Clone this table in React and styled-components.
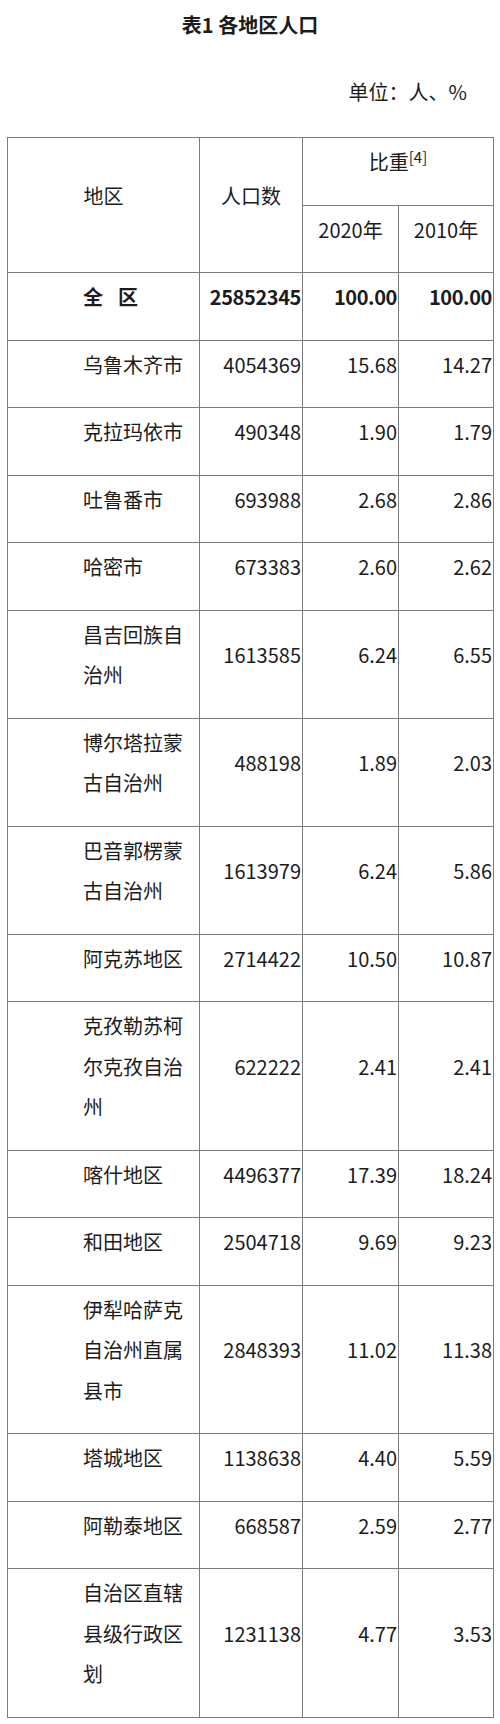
import React from 'react'
import styled, { createGlobalStyle } from 'styled-components'

const GlobalStyle = createGlobalStyle`
  body {
    margin: 0;
    background: #fff;
    color: #1c1c1c;
    font-family: "Noto Sans CJK SC", "Noto Sans", sans-serif;
  }
`;

const Page = styled.div`
  width: 500px;
  padding: 5px 7px 6px;
  box-sizing: border-box;
`;

const Title = styled.h1`
  margin: 0;
  font-size: 20px;
  font-weight: 700;
  line-height: 40px;
  text-align: center;
`;

const Unit = styled.div`
  margin-top: 27px;
  padding-right: 26px;
  font-size: 20px;
  line-height: 40px;
  text-align: right;
`;

const Table = styled.table`
  margin-top: 25px;
  width: 486px;
  border-collapse: collapse;
  table-layout: fixed;
  font-size: 20px;
  line-height: 40.5px;
`;

const Cell = styled.td`
  border: 1px solid #7c7c7c;
  padding: 4px 1px 22px 0;
  vertical-align: middle;
  text-align: right;
  font-weight: ${p => (p.$bold ? 700 : 400)};
  letter-spacing: ${p => (p.$bold ? '-0.4px' : 'normal')};
`;

const HeadCell = styled(Cell).attrs({ as: 'th' })`
  text-align: center;
  font-weight: 400;
  padding-right: 0;
`;

const NameCell = styled(Cell)`
  text-align: left;
  padding-left: 75px;
  padding-right: 10px;
  letter-spacing: normal;
`;

const Spaced = styled.span`
  letter-spacing: 15px;
`;

const Note = styled.sup`
  font-size: 15px;
  line-height: 0;
  vertical-align: 7px;
`;

const rows = [
  ['乌鲁木齐市', '4054369', '15.68', '14.27'],
  ['克拉玛依市', '490348', '1.90', '1.79'],
  ['吐鲁番市', '693988', '2.68', '2.86'],
  ['哈密市', '673383', '2.60', '2.62'],
  ['昌吉回族自治州', '1613585', '6.24', '6.55'],
  ['博尔塔拉蒙古自治州', '488198', '1.89', '2.03'],
  ['巴音郭楞蒙古自治州', '1613979', '6.24', '5.86'],
  ['阿克苏地区', '2714422', '10.50', '10.87'],
  ['克孜勒苏柯尔克孜自治州', '622222', '2.41', '2.41'],
  ['喀什地区', '4496377', '17.39', '18.24'],
  ['和田地区', '2504718', '9.69', '9.23'],
  ['伊犁哈萨克自治州直属县市', '2848393', '11.02', '11.38'],
  ['塔城地区', '1138638', '4.40', '5.59'],
  ['阿勒泰地区', '668587', '2.59', '2.77'],
  ['自治区直辖县级行政区划', '1231138', '4.77', '3.53'],
];

export default function App() {
  return (
    <>
      <GlobalStyle />
      <Page>
        <Title>表1 各地区人口</Title>
        <Unit>单位：人、%</Unit>
        <Table>
          <colgroup>
            <col style={{ width: 192 }} />
            <col style={{ width: 103 }} />
            <col style={{ width: 96 }} />
            <col style={{ width: 95 }} />
          </colgroup>
          <thead>
            <tr>
              <HeadCell rowSpan={2}>地区</HeadCell>
              <HeadCell rowSpan={2}>人口数</HeadCell>
              <HeadCell colSpan={2}>比重<Note>[4]</Note></HeadCell>
            </tr>
            <tr>
              <HeadCell>2020年</HeadCell>
              <HeadCell>2010年</HeadCell>
            </tr>
          </thead>
          <tbody>
            <tr>
              <NameCell $bold><Spaced>全区</Spaced></NameCell>
              <Cell $bold>25852345</Cell>
              <Cell $bold>100.00</Cell>
              <Cell $bold>100.00</Cell>
            </tr>
            {rows.map(([name, pop, y20, y10]) => (
              <tr key={name}>
                <NameCell>{name}</NameCell>
                <Cell>{pop}</Cell>
                <Cell>{y20}</Cell>
                <Cell>{y10}</Cell>
              </tr>
            ))}
          </tbody>
        </Table>
      </Page>
    </>
  )
}
